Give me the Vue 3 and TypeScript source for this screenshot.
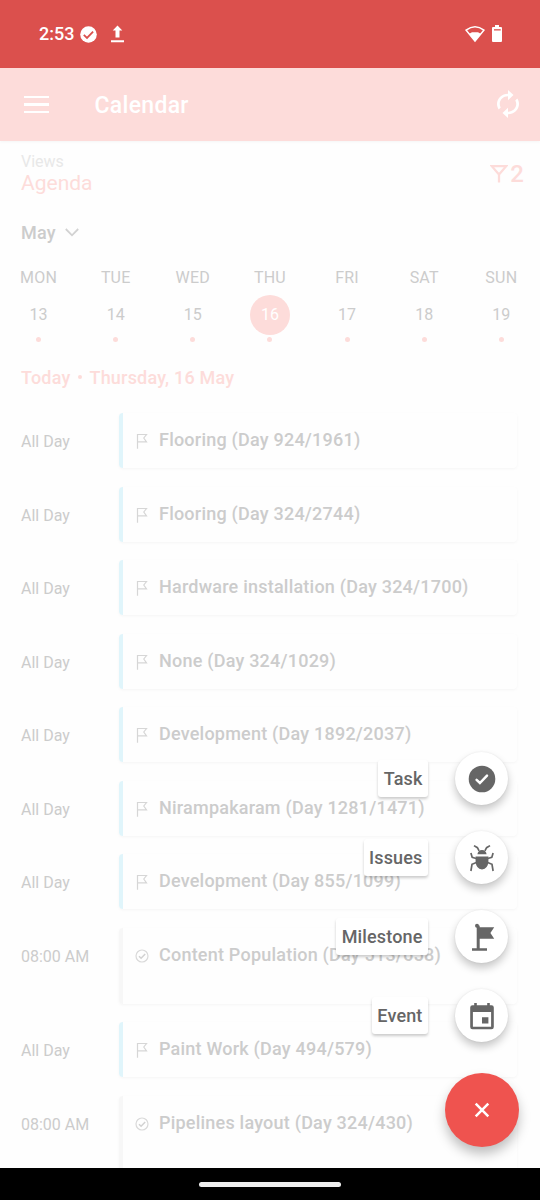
<script setup lang="ts">
interface Day { name: string; date: number; selected?: boolean }
interface Entry { time: string; title: string; kind: 'milestone' | 'task' }
interface Action { label: string; icon: 'task' | 'bug' | 'flag' | 'event' }

const days: Day[] = [
  { name: 'MON', date: 13 },
  { name: 'TUE', date: 14 },
  { name: 'WED', date: 15 },
  { name: 'THU', date: 16, selected: true },
  { name: 'FRI', date: 17 },
  { name: 'SAT', date: 18 },
  { name: 'SUN', date: 19 },
]

const entries: Entry[] = [
  { time: 'All Day', title: 'Flooring (Day 924/1961)', kind: 'milestone' },
  { time: 'All Day', title: 'Flooring (Day 324/2744)', kind: 'milestone' },
  { time: 'All Day', title: 'Hardware installation (Day 324/1700)', kind: 'milestone' },
  { time: 'All Day', title: 'None (Day 324/1029)', kind: 'milestone' },
  { time: 'All Day', title: 'Development (Day 1892/2037)', kind: 'milestone' },
  { time: 'All Day', title: 'Nirampakaram (Day 1281/1471)', kind: 'milestone' },
  { time: 'All Day', title: 'Development (Day 855/1099)', kind: 'milestone' },
  { time: '08:00 AM', title: 'Content Population (Day 513/658)', kind: 'task' },
  { time: 'All Day', title: 'Paint Work (Day 494/579)', kind: 'milestone' },
  { time: '08:00 AM', title: 'Pipelines layout (Day 324/430)', kind: 'task' },
]

const actions: Action[] = [
  { label: 'Task', icon: 'task' },
  { label: 'Issues', icon: 'bug' },
  { label: 'Milestone', icon: 'flag' },
  { label: 'Event', icon: 'event' },
]
</script>

<template>
  <div class="phone">
    <div class="status">
      <span class="clock">2:53</span>
      <svg class="st-check" width="17" height="17" viewBox="0 0 17 17">
        <circle cx="8.5" cy="8.5" r="8.3" fill="#fff" />
        <path d="M3.8 8.8l3.2 3.1 6.1-6.3" fill="none" stroke="#db504d" stroke-width="1.8" />
      </svg>
      <svg class="st-up" width="13" height="18" viewBox="0 0 13 18">
        <path d="M6.5 0.4L11.3 5.6H8.5V12.5H4.5V5.6H1.7Z M0 15.3H13V17.2H0Z" fill="#fff" />
      </svg>
      <span class="grow"></span>
      <svg width="20" height="18" viewBox="0 0 20 18">
        <path d="M1.1 5.2Q10-1.8 18.9 5.2L10 16Z" fill="none" stroke="#fff" stroke-width="1.6" />
        <path d="M4.2 8.8L7 7.3H13L15.8 8.8L10 16.2Z" fill="#fff" />
      </svg>
      <svg class="st-batt" width="10" height="17" viewBox="0 0 10 17">
        <path d="M3 0H7V2H9Q10 2 10 3V16Q10 17 9 17H1Q0 17 0 16V3Q0 2 1 2H3Z" fill="#fff" />
        <path d="M2 4.2H8.7V5.5H2Z" fill="#db504d" />
      </svg>
    </div>

    <header class="appbar">
      <div class="burger"><i></i><i></i><i></i></div>
      <h1>Calendar</h1>
      <span class="grow"></span>
      <svg class="sync" width="22" height="28" viewBox="4 1 16 22" preserveAspectRatio="none">
        <path d="M12 6v3l4-4-4-4v3c-4.42 0-8 3.58-8 8 0 1.57.46 3.03 1.24 4.26L6.7 14.8c-.45-.83-.7-1.79-.7-2.8 0-3.31 2.69-6 6-6zm6.76 1.74L17.3 9.2c.44.84.7 1.79.7 2.8 0 3.31-2.69 6-6 6v-3l-4 4 4 4v-3c4.42 0 8-3.58 8-8 0-1.57-.46-3.03-1.24-4.26z" fill="#fff" />
      </svg>
    </header>

    <main class="body">
      <div class="views">
        <div>
          <div class="v-label">Views</div>
          <div class="v-name">Agenda</div>
        </div>
        <div class="filter">
          <svg width="18" height="18" viewBox="0 0 18 18">
            <path d="M1.8 1.2H16.2L9 9.6Z M9 8.5V17.5" fill="none" stroke="#fddcda" stroke-width="2.3" />
          </svg>
          <span>2</span>
        </div>
      </div>

      <div class="month">
        <span>May</span>
        <svg width="14" height="9" viewBox="0 0 14 9"><path d="M.8 1L7 7.3 13.2 1" fill="none" stroke="#d2d2d2" stroke-width="1.8" /></svg>
      </div>

      <div class="week">
        <div v-for="d in days" :key="d.date" class="day">
          <span class="d-name">{{ d.name }}</span>
          <span class="d-num" :class="{ selected: d.selected }">{{ d.date }}</span>
          <i class="dot"></i>
        </div>
      </div>

      <div class="today"><span>Today</span><i></i><span>Thursday, 16 May</span></div>

      <div class="list">
        <div v-for="(e, n) in entries" :key="n" class="entry" :class="e.kind">
          <div class="time">{{ e.time }}</div>
          <div class="card">
            <svg v-if="e.kind === 'milestone'" width="14" height="16" viewBox="0 0 14 16">
              <path d="M2.5 15.7V1.5H11.5L8.8 5 11.5 8.8H2.5" fill="none" stroke="#d6d6d6" stroke-width="1.2" />
            </svg>
            <svg v-else width="14" height="16" viewBox="0 0 14 16">
              <circle cx="7" cy="8" r="6" fill="none" stroke="#d9d9d9" stroke-width="1.2" />
              <path d="M4 8.3l2.1 2 4.1-4.2" fill="none" stroke="#d2d2d2" stroke-width="1.5" />
            </svg>
            <span class="title">{{ e.title }}</span>
          </div>
        </div>
      </div>
    </main>

    <div class="navbar"><i></i></div>

    <div class="speed-dial">
      <div v-for="a in actions" :key="a.label" class="action">
        <span class="a-label">{{ a.label }}</span>
        <span class="a-btn">
          <svg v-if="a.icon === 'task'" width="28" height="28" viewBox="0 0 28 28">
            <circle cx="14" cy="14" r="13.3" fill="#666" />
            <path d="M8.6 14.9l3.3 3.1 7.1-7.3" fill="none" stroke="#fff" stroke-width="2.5" stroke-linecap="round" />
          </svg>
          <svg v-else-if="a.icon === 'bug'" width="28" height="28" viewBox="0 0 28 28">
            <path d="M9.4 10.3Q10 6.1 14 5.9 18 6.1 18.6 10.3Z M7.6 12.6H20.4V17.5Q20 24.6 14 25.6 8 24.6 7.6 17.5Z" fill="#666" />
            <path d="M11.1 6.9L9.4 3.7 6 1.6M16.9 6.9L18.6 3.7 22 1.6M8.2 14.5L4.2 13.4 2.9 8.9M19.8 14.5L23.8 13.4 25.1 8.9M8.4 18.5L4 20.3 2.9 27M19.6 18.5L24 20.3 25.1 27" fill="none" stroke="#666" stroke-width="1.7" />
          </svg>
          <svg v-else-if="a.icon === 'flag'" width="28" height="28" viewBox="0 0 28 28">
            <path d="M10.2 26V2.6" stroke="#666" stroke-width="3" />
            <circle cx="9" cy="2.7" r="2" fill="#666" />
            <path d="M10 4.2H26.2L22.4 10 26.2 15.8H10Z M4 25.2H19V27.7H4Z" fill="#666" />
          </svg>
          <svg v-else width="28" height="28" viewBox="0 0 28 28">
            <path fill-rule="evenodd" d="M6.2 1H8.8V3.2H19.2V1H21.8V3.2H23.5Q25.8 3.2 25.8 5.5V25Q25.8 27.3 23.5 27.3H4.5Q2.2 27.3 2.2 25V5.5Q2.2 3.2 4.5 3.2H6.2Z M4.9 9.9V24.8H23.1V9.9Z M14 15.2H20.4V21.6H14Z" fill="#666" />
          </svg>
        </span>
      </div>
      <span class="fab">
        <svg width="16" height="16" viewBox="0 0 16 16"><path d="M1.7 1.7L14.3 14.3M14.3 1.7L1.7 14.3" stroke="#fff" stroke-width="2.5" /></svg>
      </span>
    </div>
  </div>
</template>

<style>
body { margin: 0; background: #fefefe; }
</style>

<style scoped>
* { box-sizing: border-box; }
svg { display: block; flex: none; }
.phone {
  position: relative;
  width: 540px;
  height: 1200px;
  display: flex;
  flex-direction: column;
  overflow: hidden;
  background: #fefefe;
  font-family: Roboto, sans-serif;
  white-space: nowrap;
}
.grow { flex: 1; }
.status {
  flex: none;
  height: 68px;
  display: flex;
  align-items: center;
  padding: 0 38px 0 39px;
  background: #db504d;
  color: #fff;
}
.clock { width: 41px; margin-top: -1px; font-size: 18px; font-weight: 500; }
.st-up { margin-left: 14px; }
.st-batt { margin: -1px 0 0 7px; }
.appbar {
  flex: none;
  height: 73px;
  display: flex;
  align-items: center;
  padding: 0 21px 0 24px;
  background: #fddcda;
  color: #fff;
  box-shadow: 0 1px 3px rgba(0, 0, 0, .04);
}
.burger { width: 25px; display: flex; flex-direction: column; gap: 5px; }
.burger i { height: 2.3px; background: #fff; }
.sync { margin-top: -1px; }
h1 { margin: 3px 0 0 45.5px; font-size: 23px; font-weight: 500; line-height: 30px; letter-spacing: .3px; }
.body { flex: 1; min-height: 0; display: flex; flex-direction: column; overflow: hidden; }
.views {
  flex: none;
  display: flex;
  justify-content: space-between;
  height: 71px;
  padding: 11px 16px 0 21px;
  color: #fddcda;
}
.v-label { font-size: 16px; line-height: 19px; color: #e8e8e8; }
.v-name { font-size: 21px; line-height: 24px; }
.filter { display: flex; align-items: center; gap: 2px; height: 44px; font-size: 24px; font-weight: 500; }
.month {
  flex: none;
  display: flex;
  align-items: center;
  gap: 9px;
  height: 41px;
  padding-left: 21px;
  font-size: 18px;
  font-weight: 500;
  letter-spacing: .2px;
  color: #ccc;
}
.week { flex: none; display: flex; padding-top: 14px; height: 103px; }
.day { width: 77.14px; display: flex; flex-direction: column; align-items: center; font-size: 16px; color: #ccc; }
.d-name { height: 23px; line-height: 22px; letter-spacing: .2px; }
.d-num {
  width: 40px;
  height: 40px;
  margin-top: 5px;
  border-radius: 50%;
  line-height: 40px;
  text-align: center;
}
.d-num.selected { background: #fddcda; color: #fff; }
.dot { width: 5px; height: 5px; margin-top: 1.5px; border-radius: 50%; background: #fddcda; }
.today {
  flex: none;
  display: flex;
  align-items: center;
  height: 42px;
  padding-left: 21px;
  font-size: 18px;
  font-weight: 500;
  letter-spacing: .2px;
  color: #fddcda;
}
.today i { width: 4px; height: 4px; margin: 0 8px 0 7px; border-radius: 50%; background: #fddcda; }
.list { display: flex; flex-direction: column; gap: 18.5px; padding-top: 15.2px; }
.entry { flex: none; display: flex; height: 55px; padding-right: 23px; color: #ccc; }
.entry.task { height: 76.2px; }
.time { width: 119px; padding-left: 21px; font-size: 16px; line-height: 57px; }
.card {
  flex: 1;
  display: flex;
  align-items: flex-start;
  gap: 10px;
  padding-left: 12px;
  border-left: 4px solid #e0f5fb;
  border-radius: 4px;
  box-shadow: 0 1px 3px rgba(0, 0, 0, .04);
}
.card svg { margin-top: 20px; }
.task .card { border-left-color: #f7f7f7; }
.title { font-size: 18px; font-weight: 500; line-height: 54px; letter-spacing: .22px; }
.navbar { flex: none; height: 32px; display: flex; justify-content: center; align-items: center; background: #000; }
.navbar i { width: 142px; height: 5px; border-radius: 3px; background: #eee; }
.speed-dial {
  position: absolute;
  right: 21px;
  bottom: 52.6px;
  display: flex;
  flex-direction: column;
  align-items: flex-end;
}
.action { display: flex; align-items: center; height: 53px; margin: 0 11px 26.1px 0; }
.a-label {
  height: 37px;
  margin-right: 27px;
  padding: 0 5.5px;
  border-radius: 3px;
  background: #fff;
  color: #666;
  font-size: 18px;
  font-weight: 500;
  line-height: 38px;
  letter-spacing: .15px;
  box-shadow: 0 2px 3px rgba(0, 0, 0, .2);
}
.a-btn {
  width: 53px;
  height: 53px;
  display: grid;
  place-items: center;
  border-radius: 50%;
  background: #fff;
  box-shadow: 0 5px 9px rgba(0, 0, 0, .22), 0 0 2px rgba(0, 0, 0, .08);
}
.fab {
  width: 74px;
  height: 74px;
  margin-top: 5px;
  display: grid;
  place-items: center;
  border-radius: 50%;
  background: #ef534f;
  box-shadow: 0 7px 12px rgba(0, 0, 0, .25);
}
</style>
